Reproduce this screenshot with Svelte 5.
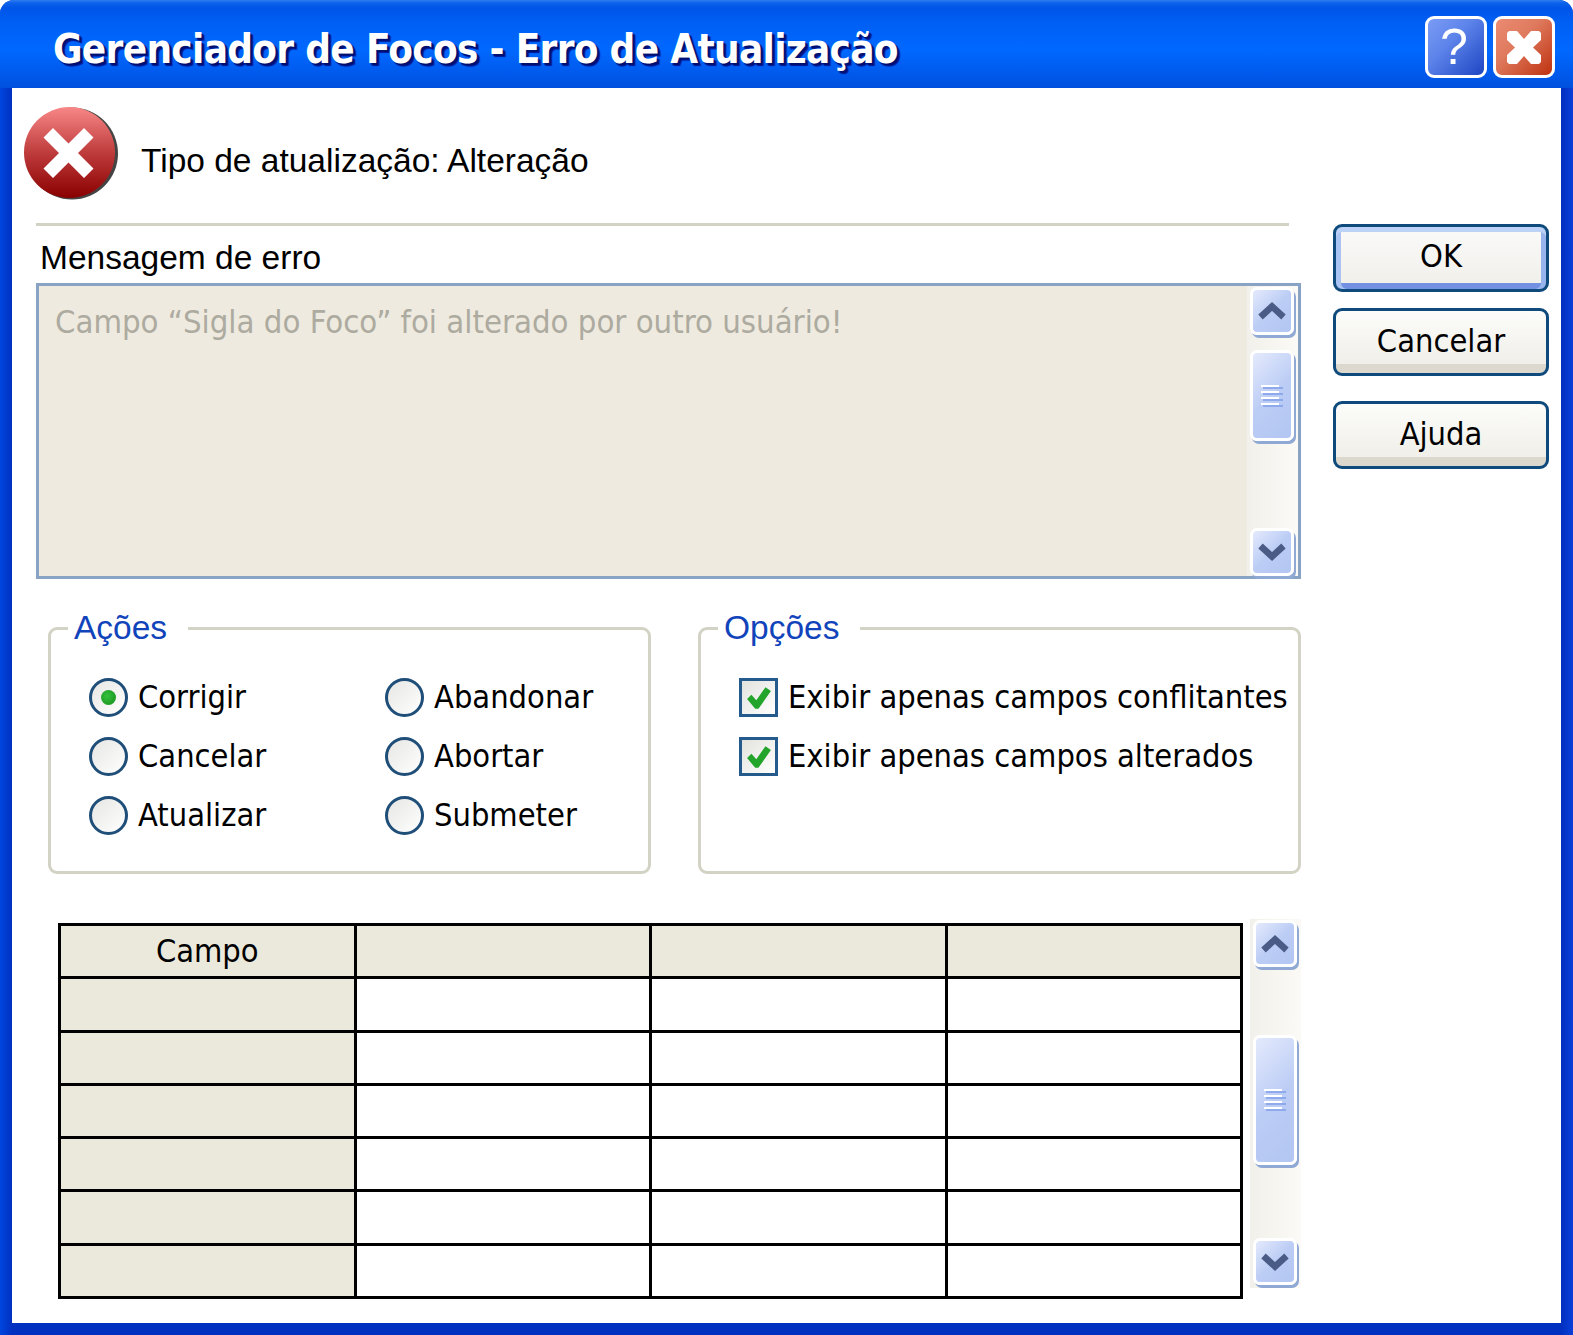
<script>
  const radios = [
    { label: 'Corrigir', on: true }, { label: 'Abandonar' },
    { label: 'Cancelar' }, { label: 'Abortar' },
    { label: 'Atualizar' }, { label: 'Submeter' }
  ];
  const checks = ['Exibir apenas campos conflitantes', 'Exibir apenas campos alterados'];
  const rows = [0, 1, 2, 3, 4, 5];
</script>

{#snippet chevron(up)}
  <svg class="chev" viewBox="0 0 28 20" aria-hidden="true">
    <path d={up ? 'M2.5 16 L14 5.5 L25.5 16' : 'M2.5 4 L14 14.5 L25.5 4'} fill="none" stroke="#4a5c85" stroke-width="6.5" stroke-linejoin="miter" />
  </svg>
{/snippet}

{#snippet scrollbar(cls)}
  <div class="scroll {cls}">
    <div class="sbtn arrow">{@render chevron(true)}</div>
    <div class="sbtn thumb">
      <svg class="grip" viewBox="0 0 22 22" aria-hidden="true">
        <g fill="#ffffff"><rect x="0" y="0" width="18" height="2" /><rect x="0" y="6" width="18" height="2" /><rect x="0" y="12" width="18" height="2" /><rect x="0" y="18" width="18" height="2" /></g>
        <g fill="#8eaaec"><rect x="2" y="2" width="20" height="2" /><rect x="2" y="8" width="20" height="2" /><rect x="2" y="14" width="20" height="2" /><rect x="2" y="20" width="20" height="2" /></g>
      </svg>
    </div>
    <div class="sbtn arrow">{@render chevron(false)}</div>
  </div>
{/snippet}

<div class="window">
  <header class="titlebar">
    <h1>Gerenciador de Focos - Erro de Atualização</h1>
    <div class="winbtns">
      <div class="winbtn help">?</div>
      <div class="winbtn close">
        <svg viewBox="0 0 34 33" aria-hidden="true"><path d="M0 2 L2 0 H10 L17 8 L24 0 H32 L34 2 V9 L26 16.5 L34 24 V31 L32 33 H24 L17 25 L10 33 H2 L0 31 V24 L8 16.5 L0 9 Z" fill="#fff" /></svg>
      </div>
    </div>
  </header>

  <div class="body">
    <main class="main">
      <div class="head">
        <svg class="erricon" viewBox="0 0 94 94" aria-hidden="true">
          <defs>
            <linearGradient id="red" x1="0" y1="0" x2="0" y2="1">
              <stop offset="0" stop-color="#f88787" />
              <stop offset="0.5" stop-color="#bf3c3c" />
              <stop offset="1" stop-color="#8a0000" />
            </linearGradient>
          </defs>
          <circle cx="48" cy="47.5" r="46" fill="#444" />
          <circle cx="45.5" cy="46.5" r="45.5" fill="url(#red)" />
          <path d="M19.5 31.5 L29 22 L44.5 37.5 L60 22 L69.5 31.5 L54 47 L69.5 62.5 L60 72 L44.5 56.5 L29 72 L19.5 62.5 L35 47 Z" fill="#fff" />
        </svg>
        <span class="type">Tipo de atualização: Alteração</span>
      </div>
      <div class="rule"></div>
      <div class="msglabel">Mensagem de erro</div>
      <div class="textarea">
        <div class="placeholder">Campo “Sigla do Foco” foi alterado por outro usuário!</div>
        {@render scrollbar('s1')}
      </div>

      <div class="groups">
        <fieldset class="group">
          <legend>Ações</legend>
          <div class="radios">
            {#each radios as r}
              <div class="opt">
                <span class="radio">{#if r.on}<span class="dot"></span>{/if}</span>
                <span class="lbl">{r.label}</span>
              </div>
            {/each}
          </div>
        </fieldset>
        <fieldset class="group opcoes">
          <legend>Opções</legend>
          <div class="checks">
            {#each checks as c}
              <div class="opt">
                <span class="check">
                  <svg viewBox="0 0 24 24" aria-hidden="true"><path d="M1 13 L5 9 L9.5 14 L18 2 L23 5.5 L11.5 22 L8.5 22 Z" fill="#22a52a" /></svg>
                </span>
                <span class="lbl">{c}</span>
              </div>
            {/each}
          </div>
        </fieldset>
      </div>

      <div class="tablewrap">
        <div class="grid">
          <div class="cell hd">Campo</div>
          <div class="cell hd"></div>
          <div class="cell hd"></div>
          <div class="cell hd"></div>
          {#each rows as r (r)}
            <div class="cell hd"></div>
            <div class="cell"></div>
            <div class="cell"></div>
            <div class="cell"></div>
          {/each}
        </div>
        {@render scrollbar('s2')}
      </div>
    </main>

    <aside class="actions">
      <div class="btn default"><span>OK</span></div>
      <div class="btn b2"><span>Cancelar</span></div>
      <div class="btn b3"><span>Ajuda</span></div>
    </aside>
  </div>
</div>

<style>
  :global(body) { margin: 0; background: #fff; }
  .window {
    width: 1573px;
    height: 1335px;
    display: flex;
    flex-direction: column;
    font-family: "DejaVu Sans Condensed", "DejaVu Sans", sans-serif;
    color: #000;
    background: linear-gradient(90deg, #0046e0 0, #0030c0 12px, #0030c0 1561px, #0a3fd8 1573px);
    border-radius: 14px 14px 0 0;
    overflow: hidden;
  }
  .titlebar {
    height: 88px;
    flex: none;
    box-sizing: border-box;
    display: flex;
    align-items: center;
    justify-content: space-between;
    padding: 6px 18px 0 53px;
    background: linear-gradient(180deg, #2f7df0 0, #0d62ea 3px, #0055e8 8px, #0060f5 24px, #0068ff 50px, #0058ea 76px, #0050dc 88px);
  }
  h1 {
    margin: 4px 0 0;
    font-size: 40px;
    letter-spacing: -0.68px;
    font-weight: 700;
    color: #fff;
    text-shadow: 2px 2px 1px #00106e, 3px 3px 1px #00189a;
    white-space: nowrap;
  }
  .winbtns { display: flex; gap: 6px; }
  .winbtn {
    width: 62px;
    height: 62px;
    box-sizing: border-box;
    border: 3px solid #fff;
    border-radius: 9px;
    display: flex;
    align-items: center;
    justify-content: center;
  }
  .help {
    background: linear-gradient(135deg, #7b9cf6 0, #5d84ea 40%, #1e45c2 100%);
    color: #fff;
    font-size: 50px;
    line-height: 1;
    padding-right: 4px;
    font-family: "Liberation Sans", sans-serif;
  }
  .close { background: linear-gradient(135deg, #ea8b72 0, #df7a5e 40%, #bf3210 100%); }
  .close svg { width: 34px; height: 33px; }

  .body {
    flex: 1;
    display: flex;
    background: #fff;
    margin: 0 12px 12px;
  }
  .main {
    width: 1277px;
    margin-left: 12px;
    display: flex;
    flex-direction: column;
  }
  .head { display: flex; align-items: center; padding-top: 18px; }
  .erricon { width: 94px; height: 94px; display: block; flex: none; }
  .type {
    margin-left: 23px;
    font-family: "Liberation Sans", sans-serif;
    font-size: 33.5px;
    position: relative;
    top: 8px;
  }
  .rule {
    margin: 23px 0 0 12px;
    width: 1253px;
    height: 3px;
    background: #d3d3c5;
  }
  .msglabel {
    margin-left: 16px;
    height: 57px;
    box-sizing: border-box;
    padding-top: 13px;
    line-height: 38px;
    font-family: "Liberation Sans", sans-serif;
    font-size: 33.5px;
  }
  .textarea {
    margin-left: 12px;
    height: 296px;
    box-sizing: border-box;
    border: 3px solid #88a3c3;
    background: #eeeadf;
    display: flex;
    justify-content: space-between;
  }
  .placeholder {
    padding: 15px 0 0 16px;
    font-size: 32.6px;
    line-height: 42px;
    color: #adab9f;
    white-space: nowrap;
  }
  .scroll {
    display: flex;
    flex-direction: column;
    background: linear-gradient(90deg, #f1f0ea, #fbfaf6);
    box-sizing: border-box;
    flex: none;
  }
  .s1 { width: 51px; padding: 1px 4px 0 3px; }
  .s2 { width: 51px; padding: 1px 4px 3px 3px; margin-left: 7px; height: 369px; }
  .sbtn {
    box-sizing: border-box;
    border: 3px solid #fff;
    border-radius: 7px;
    background: linear-gradient(135deg, #e4eafc 0, #bccdf5 50%, #b2c6f2 100%);
    box-shadow: 2px 3px 0 #8fa8d4;
    display: flex;
    align-items: center;
    justify-content: center;
  }
  .s1 .arrow { height: 48px; }
  .s2 .arrow { height: 47px; }
  .thumb { margin-bottom: auto; }
  .s1 .thumb { height: 91px; margin-top: 15px; }
  .s2 .thumb { height: 130px; margin-top: 68px; }
  .chev { width: 28px; height: 20px; display: block; }
  .grip { width: 22px; height: 22px; display: block; }

  .groups {
    margin: 30px 0 0 24px;
    display: flex;
    gap: 47px;
  }
  .group {
    margin: 0;
    width: 603px;
    height: 265px;
    box-sizing: border-box;
    border: 3px solid #d3d3c5;
    border-radius: 9px;
    padding: 33px 0 0 38px;
    min-width: 0;
  }
  .opcoes { padding-left: 38px; }
  legend {
    margin-left: -21px;
    padding: 0 21px 0 6px;
    font-family: "Liberation Sans", sans-serif;
    font-size: 33.5px;
    line-height: 38px;
    color: #1144bb;
  }
  .opcoes legend { margin-left: -21px; }
  .radios {
    display: grid;
    grid-template-columns: 296px 1fr;
    row-gap: 20px;
    margin-top: -2px;
  }
  .checks { display: flex; flex-direction: column; gap: 20px; margin-top: -2px; }
  .opt {
    display: flex;
    align-items: center;
    gap: 10px;
    height: 39px;
    font-size: 32.35px;
    white-space: nowrap;
  }
  .lbl { margin-top: -2px; }
  .radio {
    width: 39px;
    height: 39px;
    flex: none;
    box-sizing: border-box;
    border: 3px solid #1f4e79;
    border-radius: 50%;
    background: linear-gradient(135deg, #e6e6e4, #ffffff);
    display: flex;
    align-items: center;
    justify-content: center;
  }
  .dot { width: 15px; height: 15px; border-radius: 50%; background: radial-gradient(circle at 40% 40%, #35c03a, #148c1c); }
  .check {
    width: 39px;
    height: 39px;
    flex: none;
    box-sizing: border-box;
    border: 3px solid #255a8c;
    background: linear-gradient(135deg, #e2e2de, #ffffff);
    display: flex;
    align-items: center;
    justify-content: center;
  }
  .check svg { width: 26px; height: 26px; }

  .tablewrap {
    display: flex;
    margin: 45px 0 0 34px;
  }
  .grid {
    margin-top: 4px;
    width: 1185px;
    height: 376px;
    box-sizing: border-box;
    border-top: 3px solid #000;
    border-left: 3px solid #000;
    display: grid;
    grid-template-columns: repeat(4, 1fr);
    grid-template-rows: repeat(7, 1fr);
  }
  .cell {
    border-right: 3px solid #000;
    border-bottom: 3px solid #000;
    background: #fff;
    font-size: 32.35px;
    display: flex;
    align-items: center;
    justify-content: center;
  }
  .hd { background: #ebe9db; }

  .actions {
    margin-left: 32px;
    width: 216px;
    padding-top: 136px;
    display: flex;
    flex-direction: column;
  }
  .btn {
    height: 68px;
    box-sizing: border-box;
    border: 3px solid #0f4a7c;
    border-radius: 9px;
    background: linear-gradient(180deg, #fcfcfa 0, #f0efe9 85%, #dcd8cd 86%, #dcd8cd 100%);
    display: flex;
    align-items: center;
    justify-content: center;
    font-size: 32.35px;
    padding-bottom: 2px;
  }
  .b2 { margin-top: 16px; }
  .b3 { margin-top: 25px; }
  .default {
    padding-bottom: 4px;
    background: linear-gradient(180deg, #fafafa, #f0efe9);
    box-shadow: inset 0 5px 0 #bcd2f6, inset 5px 0 0 #a9c3f2, inset -5px 0 0 #98b4ec, inset 0 -6px 0 #7391e2;
  }
</style>
